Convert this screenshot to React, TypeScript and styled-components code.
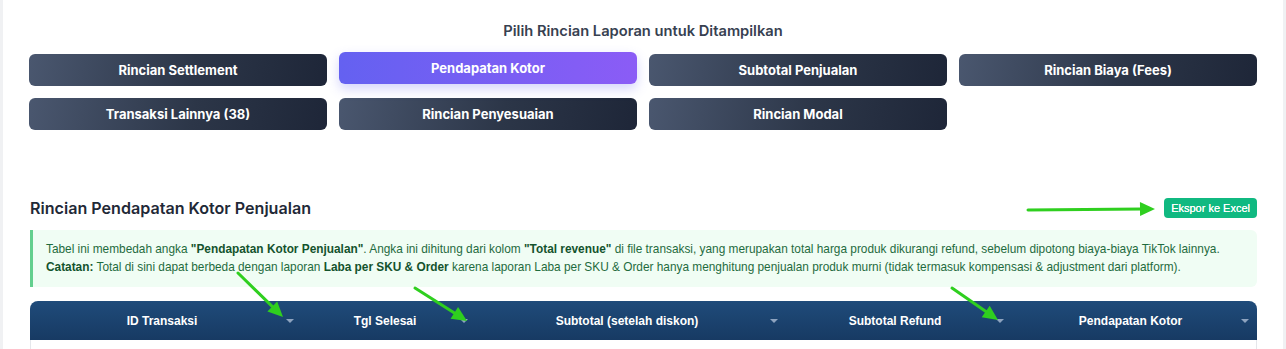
import React from 'react';
import styled, { createGlobalStyle, css } from 'styled-components';

const GlobalStyle = createGlobalStyle`
  html, body {
    margin: 0;
    padding: 0;
    background: #f0f1f3;
  }
  * {
    box-sizing: border-box;
  }
`;

const Page = styled.div`
  position: relative;
  width: 1286px;
  height: 349px;
  overflow: hidden;
`;

const Card = styled.div`
  margin: 0 3px;
  height: 100%;
  background: #ffffff;
  padding: 21px 26px 0 26px;
`;

const PickerTitle = styled.h3`
  margin: 0 0 13px;
  text-align: center;
  font-family: Inter, 'Noto Sans', sans-serif;
  font-size: 14.7px;
  line-height: 20px;
  font-weight: 600;
  color: #374151;
`;

const ButtonGrid = styled.div`
  display: grid;
  grid-template-columns: repeat(4, 1fr);
  gap: 12px;
`;

const ReportButton = styled.button<{ $active?: boolean }>`
  height: 32px;
  border: none;
  border-radius: 6px;
  font-family: Inter, 'Noto Sans', sans-serif;
  font-size: 13px;
  font-weight: 700;
  color: #ffffff;
  cursor: pointer;
  background: linear-gradient(100deg, #4a576f 0%, #2c3648 55%, #1e2638 100%);

  ${p =>
    p.$active &&
    css`
      background: linear-gradient(90deg, #6461f1 0%, #8b5cf6 100%);
      transform: translateY(-2px);
      box-shadow: 0 5px 12px rgba(99, 102, 241, 0.28);
    `}
`;

const Section = styled.section`
  margin: 66px 0 0 1px;
`;

const SectionHeader = styled.div`
  display: flex;
  align-items: center;
  justify-content: space-between;
  height: 24px;
`;

const SectionTitle = styled.h2`
  margin: 0;
  font-family: Inter, 'Noto Sans', sans-serif;
  font-size: 16.1px;
  font-weight: 600;
  color: #1f2937;
`;

const ExportButton = styled.button`
  height: 20px;
  padding: 0 7px;
  border: none;
  border-radius: 4px;
  background: #10b981;
  color: #ffffff;
  font-family: 'Liberation Sans', Arial, sans-serif;
  font-size: 11px;
  cursor: pointer;
  text-shadow: 0 0 0.3px #ffffff;
`;

const InfoBox = styled.div`
  margin-top: 10px;
  padding: 10px 12px 11px 13px;
  background: #f0fdf4;
  border-left: 3px solid #63cf8e;
  border-radius: 0 6px 6px 0;
  font-family: 'Liberation Sans', Arial, sans-serif;
  font-size: 11.85px;
  line-height: 18px;
  color: #1f6b3e;

  b {
    color: #14532d;
  }
`;

const Table = styled.div`
  margin-top: 14px;
  border: 1px solid #e5e7eb;
  border-top: none;
  border-radius: 8px 8px 0 0;
  height: 60px;
`;

const HeaderRow = styled.div`
  display: grid;
  grid-template-columns: 272px 174px 310px 226px 1fr;
  height: 39px;
  margin: 0 -1px;
  border-radius: 8px 8px 0 0;
  background: linear-gradient(180deg, #1f4b7a 0%, #173a63 100%);
`;

const HeaderCell = styled.div`
  display: flex;
  align-items: center;
  padding: 0 8px;
  font-family: 'Liberation Sans', Arial, sans-serif;
  font-size: 12px;
  font-weight: 700;
  color: #ffffff;
`;

const HeaderLabel = styled.span`
  flex: 1;
  text-align: center;
`;

const Caret = styled.span`
  width: 0;
  height: 0;
  border-left: 4px solid transparent;
  border-right: 4px solid transparent;
  border-top: 4px solid #8ea3bf;
`;

const Annotations = styled.svg`
  position: absolute;
  top: 0;
  left: 0;
  pointer-events: none;
`;

const reports = [
  'Rincian Settlement',
  'Pendapatan Kotor',
  'Subtotal Penjualan',
  'Rincian Biaya (Fees)',
  'Transaksi Lainnya (38)',
  'Rincian Penyesuaian',
  'Rincian Modal',
];

const columns = ['ID Transaksi', 'Tgl Selesai', 'Subtotal (setelah diskon)', 'Subtotal Refund', 'Pendapatan Kotor'];

const arrows: [number, number, number, number][] = [
  [1028, 210, 1155, 209],
  [238, 273, 283, 317],
  [415, 288, 467, 321],
  [952, 288, 998, 320],
];

const ARROW_GREEN = '#2fcf1f';

function Arrow({ x1, y1, x2, y2 }: { x1: number; y1: number; x2: number; y2: number }) {
  const len = Math.hypot(x2 - x1, y2 - y1);
  const dx = (x2 - x1) / len;
  const dy = (y2 - y1) / len;
  const head = 15;
  const half = 7;
  const bx = x2 - dx * head;
  const by = y2 - dy * head;
  const pts = [
    [x2, y2],
    [bx - dy * half, by + dx * half],
    [bx + dy * half, by - dx * half],
  ]
    .map(p => p.join(','))
    .join(' ');
  return (
    <g>
      <line x1={x1} y1={y1} x2={bx + dx * 2} y2={by + dy * 2} stroke={ARROW_GREEN} strokeWidth={3} strokeLinecap="round" />
      <polygon points={pts} fill={ARROW_GREEN} />
    </g>
  );
}

const App: React.FC = () => {
  return (
    <Page>
      <GlobalStyle />
      <Card>
        <PickerTitle>Pilih Rincian Laporan untuk Ditampilkan</PickerTitle>
        <ButtonGrid>
          {reports.map(r => (
            <ReportButton key={r} $active={r === 'Pendapatan Kotor'}>
              {r}
            </ReportButton>
          ))}
        </ButtonGrid>

        <Section>
          <SectionHeader>
            <SectionTitle>Rincian Pendapatan Kotor Penjualan</SectionTitle>
            <ExportButton>Ekspor ke Excel</ExportButton>
          </SectionHeader>
          <InfoBox>
            Tabel ini membedah angka <b>"Pendapatan Kotor Penjualan"</b>. Angka ini dihitung dari kolom{' '}
            <b>"Total revenue"</b> di file transaksi, yang merupakan total harga produk dikurangi refund, sebelum
            dipotong biaya-biaya TikTok lainnya.
            <br />
            <b>Catatan:</b> Total di sini dapat berbeda dengan laporan <b>Laba per SKU &amp; Order</b> karena laporan
            Laba per SKU &amp; Order hanya menghitung penjualan produk murni (tidak termasuk kompensasi &amp; adjustment
            dari platform).
          </InfoBox>
          <Table>
            <HeaderRow>
              {columns.map(c => (
                <HeaderCell key={c}>
                  <HeaderLabel>{c}</HeaderLabel>
                  <Caret />
                </HeaderCell>
              ))}
            </HeaderRow>
          </Table>
        </Section>
      </Card>
      <Annotations width={1286} height={349} viewBox="0 0 1286 349">
        {arrows.map(([x1, y1, x2, y2], i) => (
          <Arrow key={i} x1={x1} y1={y1} x2={x2} y2={y2} />
        ))}
      </Annotations>
    </Page>
  );
};

export default App;
